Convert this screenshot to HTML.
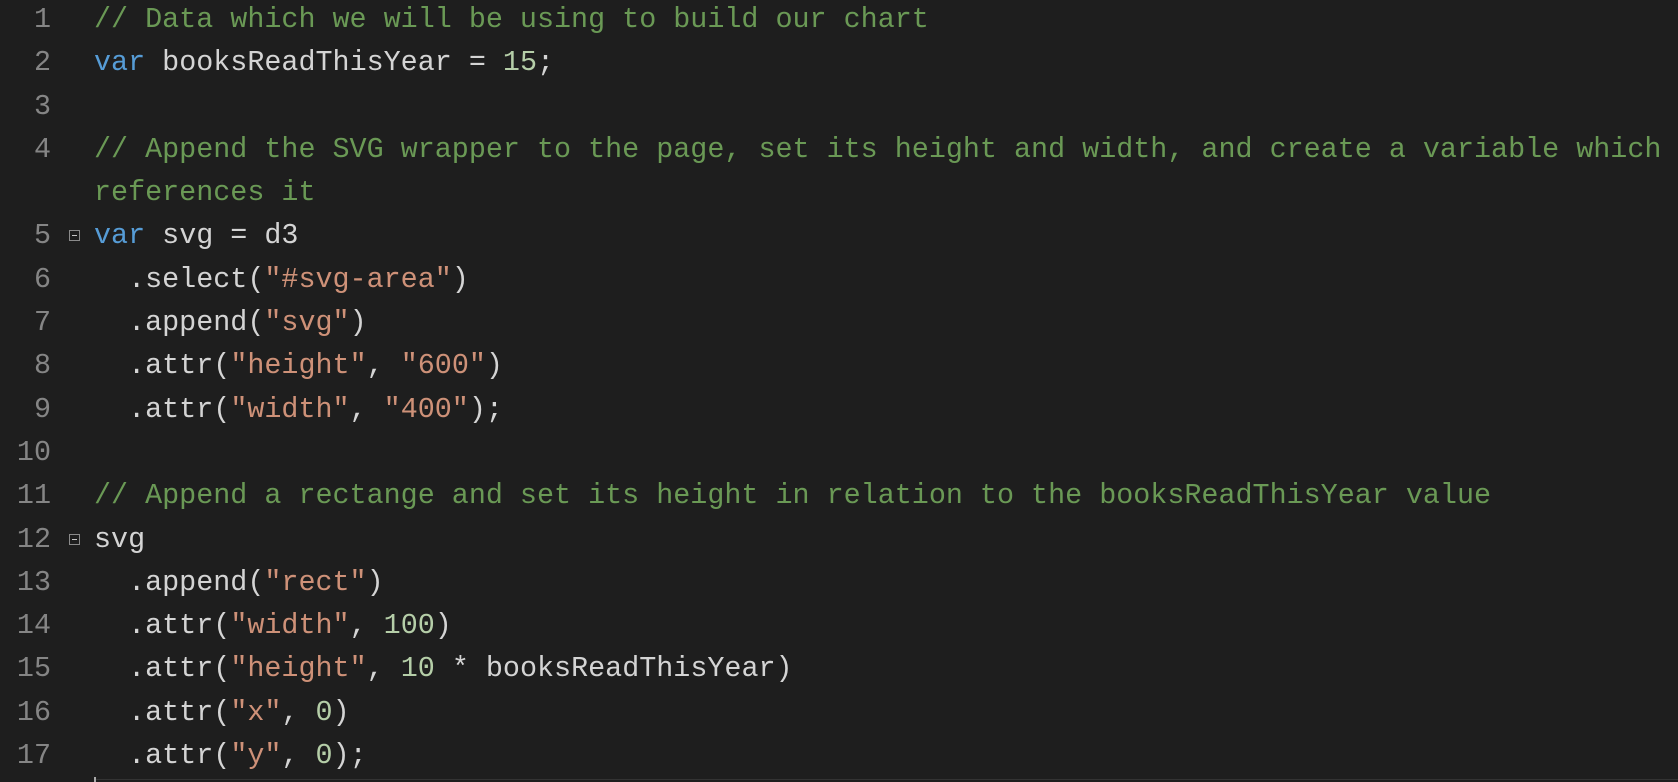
<!DOCTYPE html>
<html><head><meta charset="utf-8"><style>
html,body{margin:0;padding:0;background:#1e1e1e;width:1678px;height:782px;overflow:hidden}
.ed{position:absolute;top:-2px;left:0;width:1678px;font-family:"Liberation Mono",monospace;font-size:28.4px;line-height:43.3px;color:#d4d4d4}
.l{position:relative;height:43.3px}
.n{position:absolute;left:0;width:51px;text-align:right;color:#858585}
.c{position:absolute;left:94px;white-space:pre}
.f{position:absolute;left:69px;top:16px;width:11px;height:11px;border:1px solid #8a8a8a;box-sizing:border-box}
.f:after{content:"";position:absolute;left:2px;top:4px;width:5px;height:1px;background:#c5c5c5}
.cm{color:#6a9955}.k{color:#569cd6}.s{color:#ce9178}.nu{color:#b5cea8}
</style></head><body>
<div class="ed"><div class="l"><span class="n">1</span><span class="c"><span class="cm">// Data which we will be using to build our chart</span></span></div><div class="l"><span class="n">2</span><span class="c"><span class="k">var</span> booksReadThisYear = <span class="nu">15</span>;</span></div><div class="l"><span class="n">3</span></div><div class="l"><span class="n">4</span><span class="c"><span class="cm">// Append the SVG wrapper to the page, set its height and width, and create a variable which</span></span></div><div class="l"><span class="c"><span class="cm">references it</span></span></div><div class="l"><span class="n">5</span><span class="f"></span><span class="c"><span class="k">var</span> svg = d3</span></div><div class="l"><span class="n">6</span><span class="c">  .select(<span class="s">"#svg-area"</span>)</span></div><div class="l"><span class="n">7</span><span class="c">  .append(<span class="s">"svg"</span>)</span></div><div class="l"><span class="n">8</span><span class="c">  .attr(<span class="s">"height"</span>, <span class="s">"600"</span>)</span></div><div class="l"><span class="n">9</span><span class="c">  .attr(<span class="s">"width"</span>, <span class="s">"400"</span>);</span></div><div class="l"><span class="n">10</span></div><div class="l"><span class="n">11</span><span class="c"><span class="cm">// Append a rectange and set its height in relation to the booksReadThisYear value</span></span></div><div class="l"><span class="n">12</span><span class="f"></span><span class="c">svg</span></div><div class="l"><span class="n">13</span><span class="c">  .append(<span class="s">"rect"</span>)</span></div><div class="l"><span class="n">14</span><span class="c">  .attr(<span class="s">"width"</span>, <span class="nu">100</span>)</span></div><div class="l"><span class="n">15</span><span class="c">  .attr(<span class="s">"height"</span>, <span class="nu">10</span> * booksReadThisYear)</span></div><div class="l"><span class="n">16</span><span class="c">  .attr(<span class="s">"x"</span>, <span class="nu">0</span>)</span></div><div class="l"><span class="n">17</span><span class="c">  .attr(<span class="s">"y"</span>, <span class="nu">0</span>);</span></div></div>
<div style="position:absolute;left:94px;top:779px;width:1584px;height:1px;background:#333"></div>
<div style="position:absolute;left:94px;top:777px;width:2px;height:5px;background:#aaa"></div>
</body></html>
